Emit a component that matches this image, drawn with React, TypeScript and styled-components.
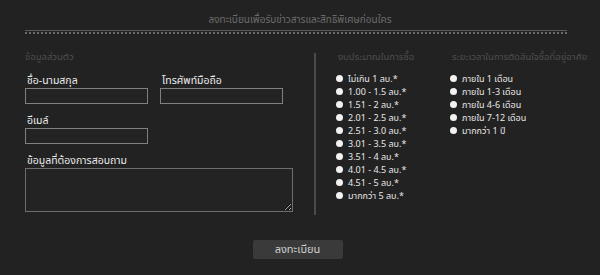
import styled, { createGlobalStyle } from "styled-components";

const GlobalStyle = createGlobalStyle`
  html, body {
    margin: 0;
    padding: 0;
    background: #222222;
  }
  body {
    font-family: "Noto Sans", "Noto Sans Thai", "DejaVu Sans", sans-serif;
  }
`;

const budgets = [
  "ไม่เกิน 1 ลบ.*",
  "1.00 - 1.5 ลบ.*",
  "1.51 - 2 ลบ.*",
  "2.01 - 2.5 ลบ.*",
  "2.51 - 3.0 ลบ.*",
  "3.01 - 3.5 ลบ.*",
  "3.51 - 4 ลบ.*",
  "4.01 - 4.5 ลบ.*",
  "4.51 - 5 ลบ.*",
  "มากกว่า 5 ลบ.*",
];

const periods = [
  "ภายใน 1 เดือน",
  "ภายใน 1-3 เดือน",
  "ภายใน 4-6 เดือน",
  "ภายใน 7-12 เดือน",
  "มากกว่า 1 ปี",
];

export default function App() {
  return (
    <Page>
      <GlobalStyle />
      <Title>ลงทะเบียนเพื่อรับข่าวสารและสิทธิพิเศษก่อนใคร</Title>
      <Rule />
      <Body>
        <LeftCol>
          <SectionHead>ข้อมูลส่วนตัว</SectionHead>
          <FieldRow>
            <Field>
              <Label>ชื่อ-นามสกุล</Label>
              <Input />
            </Field>
            <Field>
              <Label>โทรศัพท์มือถือ</Label>
              <Input />
            </Field>
          </FieldRow>
          <FieldRow>
            <Field>
              <Label>อีเมล์</Label>
              <Input />
            </Field>
          </FieldRow>
          <Field>
            <Label>ข้อมูลที่ต้องการสอบถาม</Label>
            <TextArea />
          </Field>
        </LeftCol>
        <VRule />
        <ChoiceCol $width={114}>
          <SectionHead>งบประมาณในการซื้อ</SectionHead>
          <Options>
            {budgets.map((b) => (
              <Option key={b}>
                <Dot />
                {b}
              </Option>
            ))}
          </Options>
        </ChoiceCol>
        <ChoiceCol $width={145}>
          <SectionHead>ระยะเวลาในการตัดสินใจซื้อที่อยู่อาศัย</SectionHead>
          <Options>
            {periods.map((p) => (
              <Option key={p}>
                <Dot />
                {p}
              </Option>
            ))}
          </Options>
        </ChoiceCol>
      </Body>
      <Footer>
        <Submit>ลงทะเบียน</Submit>
      </Footer>
    </Page>
  );
}

const Page = styled.div`
  width: 600px;
  height: 275px;
  box-sizing: border-box;
  background: #222222;
  overflow: hidden;
`;

const Title = styled.div`
  text-align: center;
  color: #6c6c6c;
  font-size: 10px;
  line-height: 14px;
  padding-top: 12px;
`;

const Rule = styled.div`
  margin: 4px 0 0 25px;
  width: 542px;
  height: 1px;
  border-top: 1px solid #5a5a5a;
  border-bottom: 2px dotted #6a6a6a;
`;

const Body = styled.div`
  display: flex;
  padding-left: 25px;
  margin-top: 16px;
`;

const LeftCol = styled.div`
  width: 270px;
  display: flex;
  flex-direction: column;
`;

const SectionHead = styled.div`
  color: #4e4e4e;
  font-size: 9.5px;
  line-height: 14px;
  white-space: nowrap;
`;

const FieldRow = styled.div`
  display: flex;
  gap: 12px;
`;

const Field = styled.div`
  display: flex;
  flex-direction: column;
  margin-top: 10px;
`;

const Label = styled.div`
  color: #ececec;
  font-size: 10.5px;
  line-height: 12px;
  padding-left: 2px;
  margin-bottom: 2px;
`;

const Input = styled.input`
  box-sizing: border-box;
  width: 123px;
  height: 16px;
  margin: 0;
  background: #232323;
  border: 1px solid #808080;
  border-radius: 0;
  outline: none;
`;

const TextArea = styled.textarea`
  box-sizing: border-box;
  width: 268px;
  height: 44px;
  margin: 0;
  background: #232323;
  border: 1px solid #6e6e6e;
  border-radius: 0;
  resize: vertical;
`;

const VRule = styled.div`
  width: 2px;
  height: 162px;
  margin-left: 19px;
  margin-top: 3px;
  background: #4a4a4a;
`;

const ChoiceCol = styled.div<{ $width: number }>`
  width: ${(p) => p.$width}px;
  margin-left: 22px;
  display: flex;
  flex-direction: column;
  &:last-child {
    margin-left: 0;
  }
`;

const Options = styled.div`
  display: flex;
  flex-direction: column;
  margin-top: 8px;
  margin-left: -2px;
`;

const Option = styled.div`
  display: flex;
  align-items: center;
  gap: 5px;
  color: #e8e8e8;
  font-size: 9px;
  line-height: 13px;
  height: 13px;
  white-space: nowrap;
`;

const Dot = styled.span`
  width: 7px;
  height: 7px;
  border-radius: 50%;
  background: #f2f2f2;
  flex: none;
`;

const Footer = styled.div`
  display: flex;
  justify-content: center;
  margin-top: 25px;
  padding-right: 5px;
`;

const Submit = styled.button`
  width: 90px;
  height: 19px;
  border: none;
  border-radius: 2px;
  background: #3a3a3a;
  color: #cfcfcf;
  font-family: inherit;
  font-size: 11px;
  padding: 0;
  cursor: pointer;
`;
